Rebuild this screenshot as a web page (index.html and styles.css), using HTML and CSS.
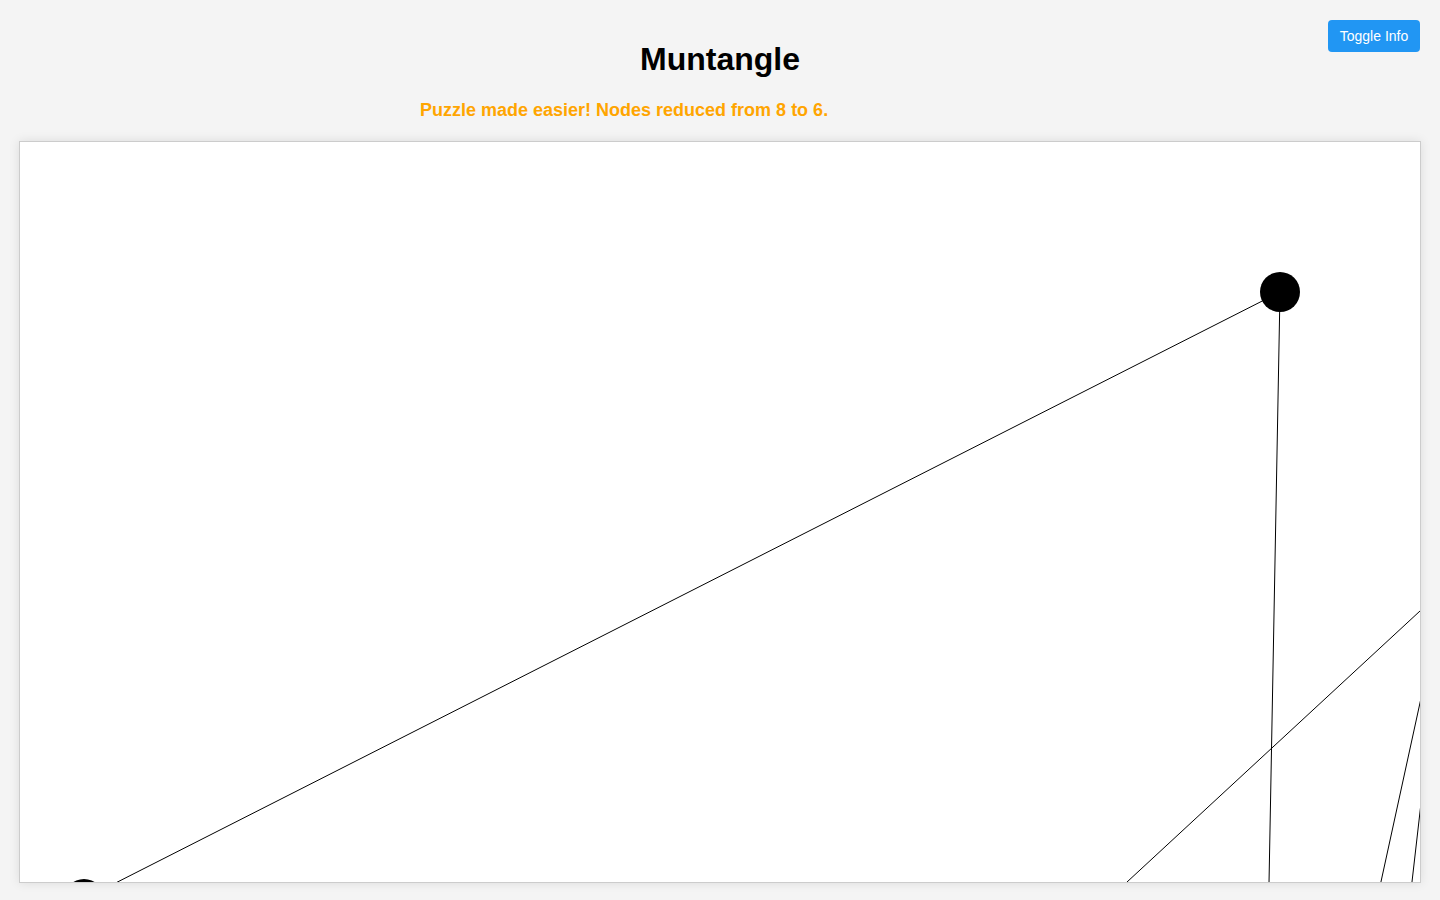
FILE: index.html
```html
<!DOCTYPE html>
<html lang="en">
<head>
<meta charset="utf-8">
<title>Muntangle</title>
<link rel="stylesheet" href="styles.css">
</head>
<body>
<button class="toggle-btn">Toggle Info</button>
<h1 class="title">Muntangle</h1>
<div class="message">Puzzle made easier! Nodes reduced from 8 to 6.</div>
<div class="board">
  <svg class="board-svg" width="1400" height="740" viewBox="0 0 1400 740">
    <g stroke="#000" stroke-width="1">
      <line x1="1260" y1="150" x2="64" y2="757"/>
      <line x1="1260" y1="150" x2="1244.2" y2="1000"/>
      <line x1="1500" y1="376.5" x2="1000" y2="839"/>
      <line x1="1450" y1="331.5" x2="1340" y2="836"/>
      <line x1="1410" y1="582.5" x2="1385" y2="801"/>
    </g>
    <circle cx="1260" cy="150" r="20" fill="#000"/>
    <circle cx="64" cy="757" r="20" fill="#000"/>
  </svg>
</div>
</body>
</html>
```
FILE: styles.css
```css
html, body {
  margin: 0;
  padding: 0;
}
body {
  background: #f4f4f4;
  font-family: "Liberation Sans", Arial, sans-serif;
  padding-top: 20px;
  height: 880px;
  overflow: hidden;
}
.toggle-btn {
  position: absolute;
  top: 20px;
  right: 20px;
  width: 92px;
  height: 32px;
  background: #2196F3;
  color: #fff;
  border: none;
  border-radius: 4px;
  font-family: "Liberation Sans", Arial, sans-serif;
  font-size: 14px;
  padding: 0;
  cursor: pointer;
}
.title {
  text-align: center;
  font-size: 32px;
  font-weight: bold;
  margin: 21px 0 22px;
  line-height: 37px;
  color: #000;
}
.message {
  max-width: 600px;
  margin: 0 auto 20px;
  color: #FFA500;
  font-weight: bold;
  font-size: 18px;
  line-height: 21px;
}
.board {
  width: 1400px;
  height: 740px;
  margin: 0 auto;
  background: #fff;
  border: 1px solid #ccc;
  box-shadow: 0 0 10px rgba(0, 0, 0, 0.1);
  overflow: hidden;
}
.board-svg {
  display: block;
}
```
